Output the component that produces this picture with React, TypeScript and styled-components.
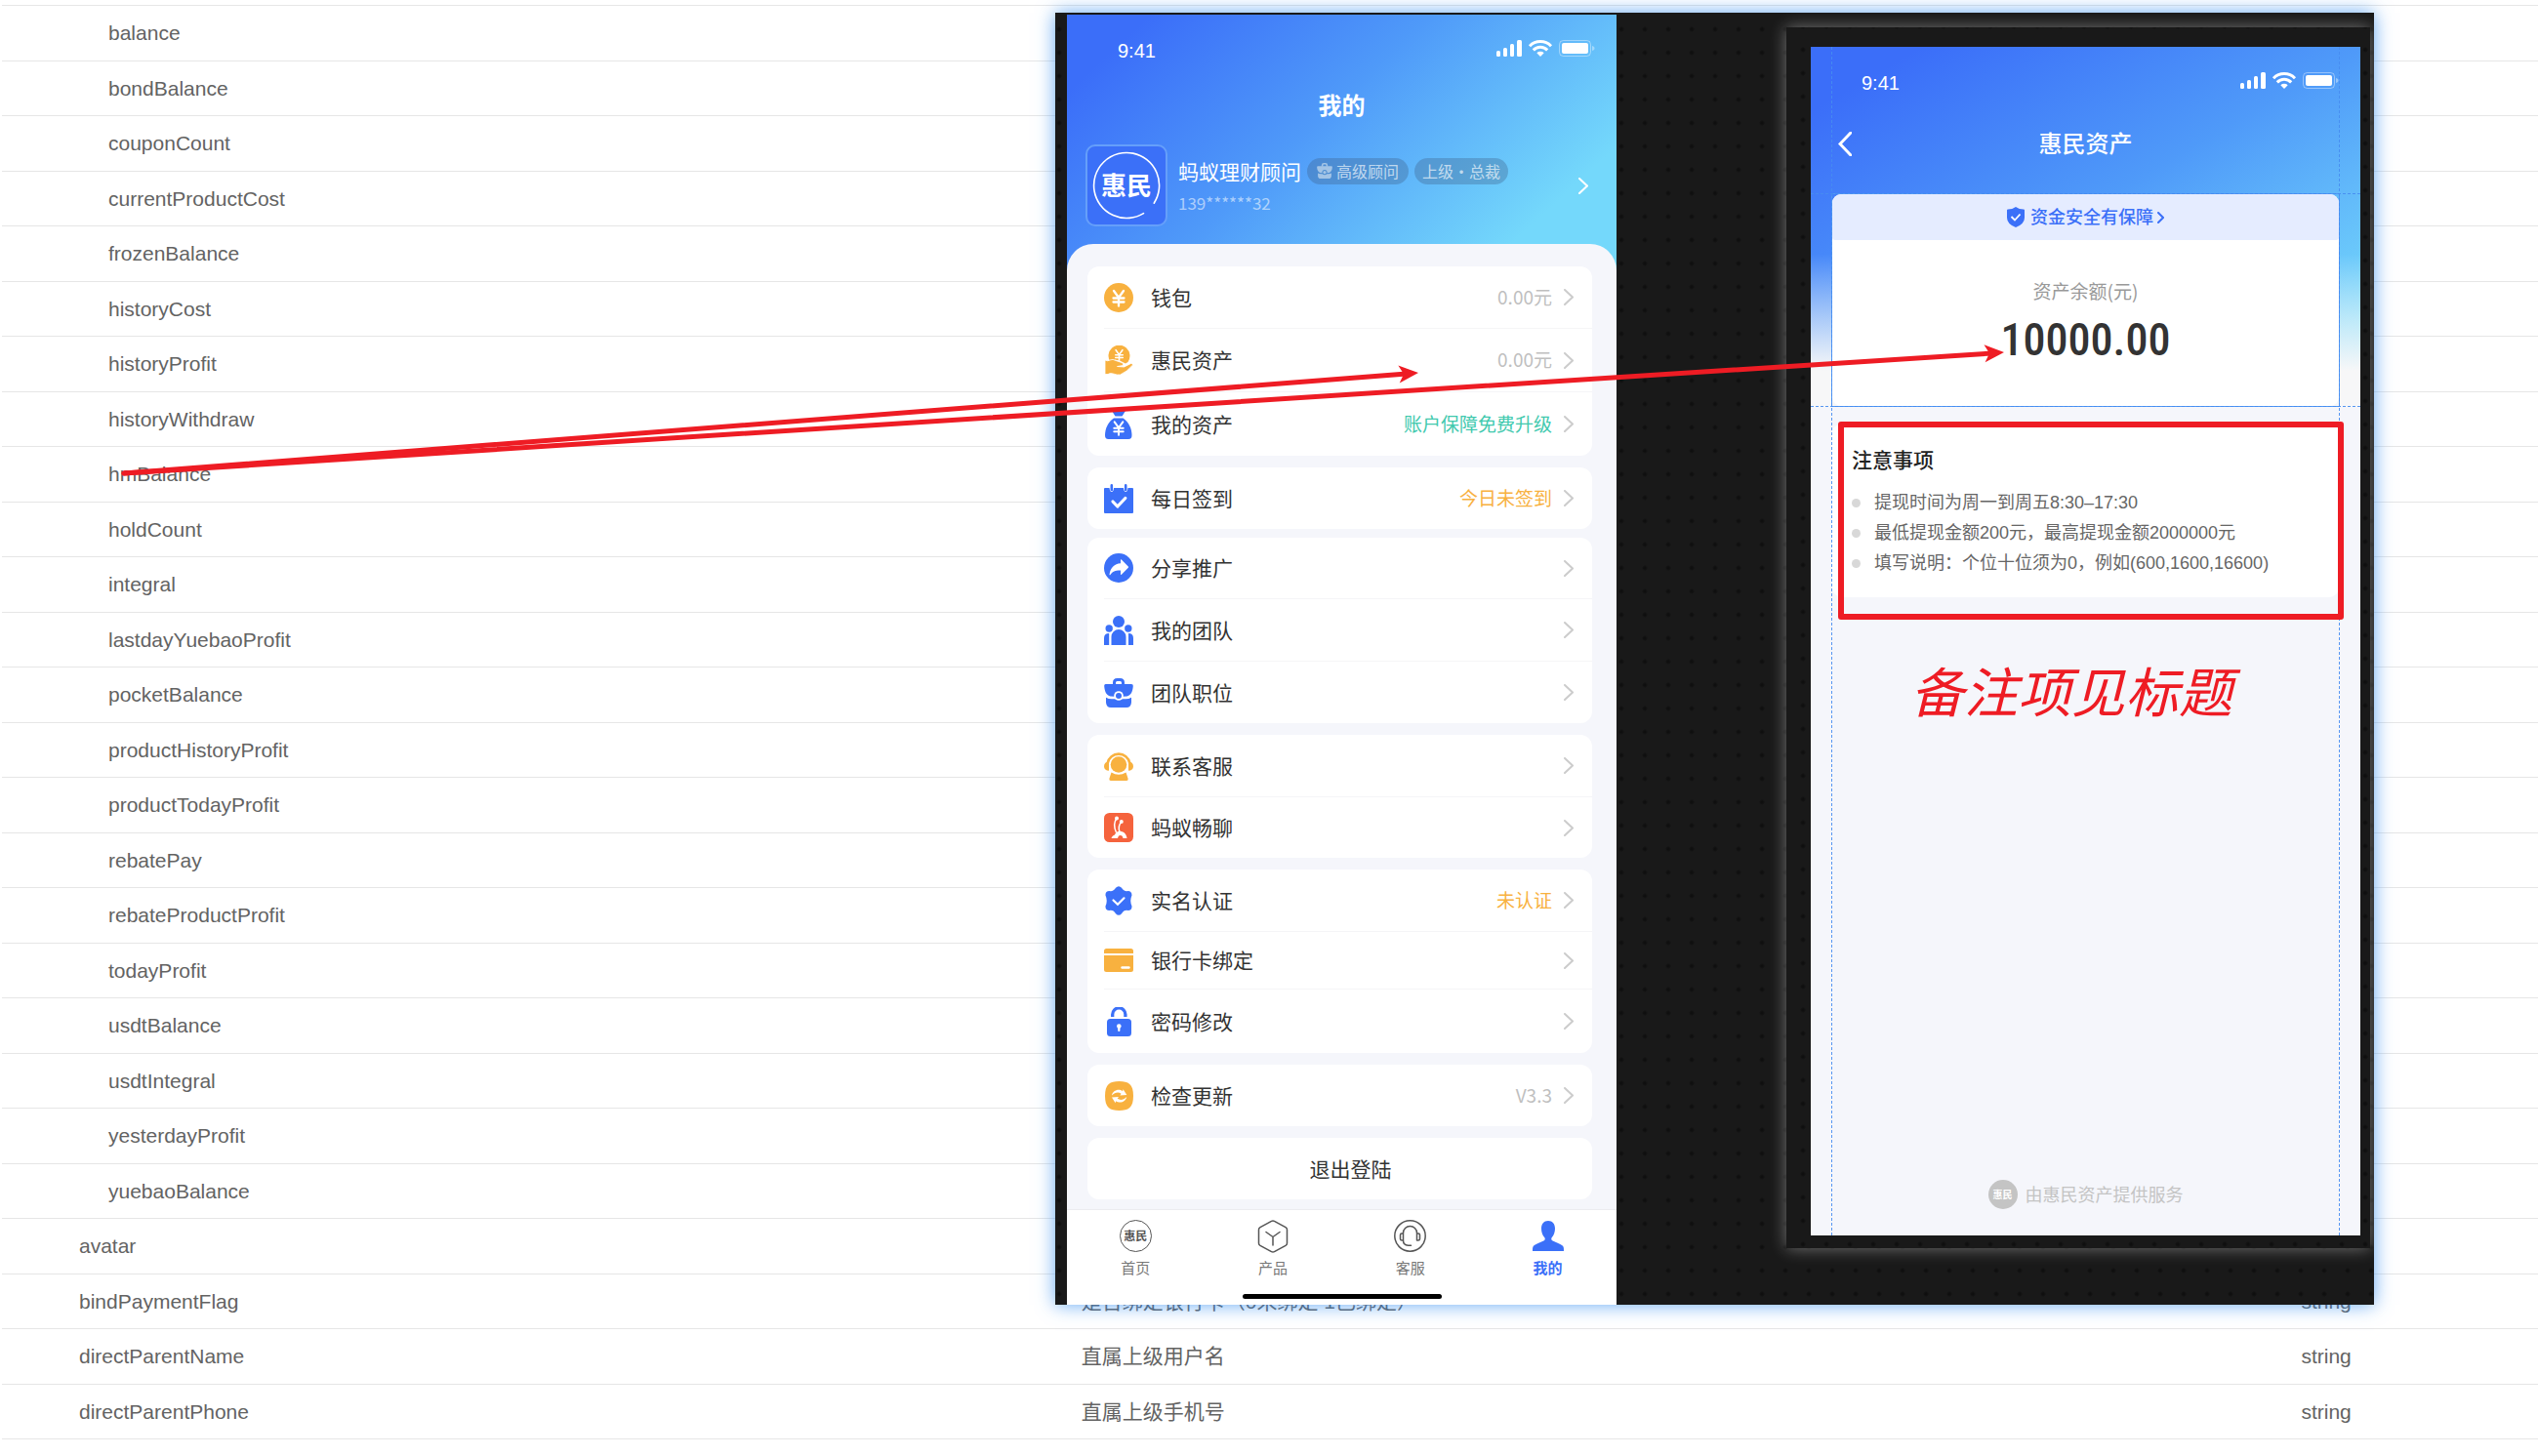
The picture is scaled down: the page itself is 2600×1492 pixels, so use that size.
import React from "react";
import styled, { createGlobalStyle } from "styled-components";

const BLUE = "#3b70f8";
const ORANGE = "#f8b13f";
const GREEN = "#41c9ae";
const RED = "#ee1c24";
const CJK = `"Noto Sans CJK SC", sans-serif`;
const LATIN = `"Liberation Sans", "Noto Sans CJK SC", sans-serif`;

const GlobalStyle = createGlobalStyle`
  * { box-sizing: border-box; }
  body { margin: 0; background: #fff; font-family: ${LATIN}; }
  button { border: 0; margin: 0; padding: 0; background: none; font: inherit; color: inherit; cursor: pointer; }
  ul { list-style: none; margin: 0; padding: 0; }
  h2, h3, p { margin: 0; font-weight: inherit; font-size: inherit; }
  svg { display: block; flex: none; }
`;

/* ---------- response field table ---------- */

const Page = styled.main`
  position: relative;
  min-height: 100vh;
  padding: 5px 0 0 2px;
  overflow: hidden;
`;

const FieldTable = styled.table`
  width: 100%;
  table-layout: fixed;
  border-collapse: separate;
  border-spacing: 0;
  border-top: 1px solid #e6e6e6;
  font-size: 21px;
  line-height: 30px;
  color: #636363;
`;

const FieldRow = styled.tr`
  height: 56px;
  &:nth-child(odd) {
    height: 57px;
  }
`;

const Cell = styled.td<{ $indent?: number }>`
  padding: 0 24px 0 ${(p) => p.$indent ?? 25}px;
  border-bottom: 1px solid #e6e6e6;
  white-space: nowrap;
`;

const Col = styled.col<{ $width: string }>`
  width: ${(p) => p.$width};
`;

type Field = { name: string; top?: boolean; desc?: string; type?: string };

const fields: Field[] = [
  ...[
    "balance",
    "bondBalance",
    "couponCount",
    "currentProductCost",
    "frozenBalance",
    "historyCost",
    "historyProfit",
    "historyWithdraw",
    "hmBalance",
    "holdCount",
    "integral",
    "lastdayYuebaoProfit",
    "pocketBalance",
    "productHistoryProfit",
    "productTodayProfit",
    "rebatePay",
    "rebateProductProfit",
    "todayProfit",
    "usdtBalance",
    "usdtIntegral",
    "yesterdayProfit",
    "yuebaoBalance",
  ].map((name) => ({ name })),
  { name: "avatar", top: true },
  { name: "bindPaymentFlag", top: true, desc: "是否绑定银行卡（0未绑定  1已绑定）", type: "string" },
  { name: "directParentName", top: true, desc: "直属上级用户名", type: "string" },
  { name: "directParentPhone", top: true, desc: "直属上级手机号", type: "string" },
];

/* ---------- floating design board ---------- */

const dots = "radial-gradient(circle at 12px 12px, #0f0f0f 1px, transparent 3px)";

const Board = styled.section`
  position: absolute;
  top: 13px;
  left: 1081px;
  width: 1351px;
  display: flex;
  justify-content: space-between;
  align-items: flex-start;
  padding: 2px 4px 0 12px;
  overflow: hidden;
  background: ${dots} -8px 5px / 24px 24px #191919;
  box-shadow: 0 0 18px rgba(50, 140, 240, 0.75);
  font-family: ${CJK};
`;

const Frame = styled.div`
  margin-top: 13px;
  padding: 20px 10px 13px 25px;
  background: ${dots} 5px 11px / 24px 24px #191919;
  box-shadow: 0 0 16px rgba(255, 255, 255, 0.4);
`;

const Phone = styled.article`
  position: relative;
  width: 563px;
  display: flex;
  flex-direction: column;
`;

const ProfilePhone = styled(Phone)`
  background: linear-gradient(137deg, #3b6ef9 10%, #4f9af9 44%, #74d8fb 83%) top / 100% 270px no-repeat #f5f6fb;
`;

const AssetPhone = styled(Phone)`
  min-height: 1218px;
  background:
    linear-gradient(180deg, rgba(247, 247, 248, 0) 64%, #f7f7f8 100%) top / 100% 332px no-repeat,
    linear-gradient(150deg, #3b6ef9 10%, #4f9af9 50%, #74d8fb 92%) top / 100% 332px no-repeat,
    linear-gradient(#f7f7f8, #f7f7f8) top / 100% 369px no-repeat,
    #f5f6fb;
`;

const StatusRow = styled.div`
  height: 66px;
  padding: 8px 22px 0 52px;
  display: flex;
  align-items: center;
  justify-content: space-between;
  color: #fff;
  font: 20px/24px ${LATIN};
  svg {
    margin-bottom: 5px;
  }
`;

const NavTitle = styled.header<{ $height: number; $bold?: boolean }>`
  height: ${(p) => p.$height}px;
  padding: 0 28px;
  display: grid;
  grid-template-columns: 24px 1fr 24px;
  align-items: center;
  text-align: center;
  color: #fff;
  font-size: 24px;
  line-height: 36px;
  font-weight: ${(p) => (p.$bold ? 700 : 500)};
  h2 {
    grid-column: 2;
    padding-bottom: 2px;
  }
`;

const Profile = styled.section`
  display: flex;
  align-items: center;
  padding: 13px 29px 18px 19px;
  color: #fff;
`;

const Avatar = styled.div`
  width: 84px;
  height: 84px;
  border: 2px solid #659ffa;
  border-radius: 10px;
  background: ${BLUE};
  display: grid;
  place-items: center;
  font-size: 26px;
  font-weight: 700;
  line-height: 36px;
  > * {
    grid-area: 1 / 1;
  }
  span {
    padding-bottom: 2px;
  }
`;

const Who = styled.div`
  flex: 1;
  margin-left: 11px;
  display: flex;
  flex-direction: column;
  gap: 6px;
`;

const NameLine = styled.div`
  display: flex;
  align-items: center;
  gap: 6px;
  font-size: 21px;
  line-height: 30px;
`;

const Tag = styled.span<{ $pad: number }>`
  height: 27px;
  padding: 0 ${(p) => p.$pad}px 1px;
  border-radius: 14px;
  display: flex;
  align-items: center;
  gap: 4px;
  background: rgba(60, 90, 130, 0.32);
  color: rgba(255, 255, 255, 0.65);
  font-size: 16px;
  line-height: 24px;
`;

const PhoneNo = styled.p`
  font-size: 17px;
  line-height: 24px;
  color: rgba(255, 255, 255, 0.55);
`;

const Sheet = styled.div`
  padding: 23px 25px 10px 21px;
  border-radius: 27px 27px 0 0;
  background: #f5f6fb;
`;

const Card = styled.ul<{ $after?: number }>`
  margin-bottom: ${(p) => p.$after ?? 12}px;
  padding-left: 17px;
  border-radius: 12px;
  background: #fff;
  li + li {
    border-top: 1px solid #f5f5f7;
  }
`;

const Row = styled.button<{ $height: number }>`
  width: 100%;
  height: ${(p) => p.$height}px;
  padding-right: 19px;
  display: flex;
  align-items: center;
  text-align: left;
`;

const RowItem = styled.li`
  display: flex;
`;

const RowLabel = styled.span`
  flex: 1;
  margin-left: 18px;
  padding-bottom: 2px;
  font-size: 21px;
  line-height: 30px;
  color: #333;
`;

const RowValue = styled.span<{ $color: string }>`
  margin-right: 12px;
  padding-bottom: 2px;
  font-size: 19px;
  line-height: 30px;
  color: ${(p) => p.$color};
`;

const Logout = styled.button`
  width: 100%;
  height: 63px;
  padding: 0 0 2px 22px;
  border-radius: 12px;
  background: #fff;
  color: #333;
  font-size: 21px;
  line-height: 30px;
`;

const TabBar = styled.nav`
  display: grid;
  grid-template-columns: repeat(4, 1fr);
  height: 87px;
  padding-top: 10px;
  border-top: 1px solid #ececf0;
  background: #fff;
`;

const Tab = styled.button<{ $active?: boolean }>`
  display: flex;
  flex-direction: column;
  align-items: center;
  gap: 5px;
  font-size: 15px;
  line-height: 22px;
  color: ${(p) => (p.$active ? BLUE : "#777")};
  font-weight: ${(p) => (p.$active ? 700 : 400)};
`;

const TabGlyph = styled.span`
  height: 33px;
  display: grid;
  place-items: center;
`;

const RoundLogo = styled.span<{ $size: number; $fill?: boolean }>`
  width: ${(p) => p.$size}px;
  height: ${(p) => p.$size}px;
  padding-bottom: 1px;
  border-radius: 50%;
  border: ${(p) => (p.$fill ? "0" : "1px solid #555")};
  background: ${(p) => (p.$fill ? "#c4c4c4" : "#fff")};
  color: ${(p) => (p.$fill ? "#fff" : "#555")};
  display: grid;
  place-items: center;
  font-size: ${(p) => (p.$fill ? 10 : 12)}px;
  line-height: 16px;
  font-weight: 700;
`;

const HomeBar = styled.div`
  height: 11px;
  background: #fff;
  &::before {
    content: "";
    display: block;
    width: 204px;
    height: 5px;
    margin: 0 auto;
    border-radius: 3px;
    background: #000;
  }
`;

/* ---------- asset screen ---------- */

const BackButton = styled.button`
  grid-column: 1;
`;

const AssetBody = styled.div`
  flex: 1;
  display: flex;
  flex-direction: column;
  padding: 18px 21px 27px;
`;

const AssetCard = styled.section`
  height: 219px;
  display: flex;
  border: 1px solid #4f97f5;
`;

const AssetPanel = styled.div`
  flex: 1;
  border-radius: 9px;
  background: #fff;
  text-align: center;
`;

const Safety = styled.button`
  width: 100%;
  height: 47px;
  display: flex;
  align-items: center;
  justify-content: center;
  gap: 4px;
  border-radius: 9px 9px 3px 3px;
  background: #e5ecff;
  color: ${BLUE};
  font-size: 18px;
  font-weight: 500;
  line-height: 26px;
`;

const SafetyText = styled.span`
  margin-left: 2px;
  padding-bottom: 3px;
`;

const AssetCaption = styled.p`
  margin-top: 38px;
  font-size: 19px;
  line-height: 28px;
  color: #999;
`;

const Amount = styled.p`
  margin-top: 8px;
  font-family: "Roboto Condensed", Roboto, sans-serif;
  font-size: 46px;
  font-weight: 500;
  line-height: 56px;
  color: #333;
`;

const Notes = styled.section`
  margin-top: 17px;
  height: 178px;
  padding: 23px 21px;
  border-radius: 12px;
  background: #fff;
  font-family: ${LATIN};
`;

const NotesTitle = styled.h3`
  font-size: 21px;
  font-weight: 500;
  line-height: 30px;
  color: #222;
`;

const NotesList = styled.ul`
  margin-top: 13px;
`;

const Note = styled.li`
  display: flex;
  align-items: center;
  gap: 14px;
  font-size: 18px;
  line-height: 31px;
  color: #666;
  white-space: nowrap;
  &::before {
    content: "";
    width: 9px;
    height: 9px;
    border-radius: 50%;
    background: #d8d8d8;
  }
`;

const Provider = styled.footer`
  margin-top: auto;
  display: flex;
  align-items: center;
  justify-content: center;
  gap: 8px;
  font-size: 18px;
  line-height: 28px;
  color: #c4c4c4;
`;

const ProviderName = styled.span`
  padding-bottom: 2px;
`;

const guide = "rgba(70, 140, 240, 0.9) 0 3px, transparent 3px 5px";

const VGuide = styled.i<{ $side: "left" | "right" }>`
  position: absolute;
  top: 0;
  bottom: 0;
  ${(p) => p.$side}: 21px;
  width: 1px;
  background: repeating-linear-gradient(180deg, ${guide});
`;

const HGuide = styled.i<{ $top: number }>`
  position: absolute;
  left: 0;
  right: 0;
  top: ${(p) => p.$top}px;
  height: 1px;
  background: repeating-linear-gradient(90deg, ${guide});
`;

/* ---------- red review marks ---------- */

const Marks = styled.svg`
  position: absolute;
  top: 0;
  left: 0;
  pointer-events: none;
`;

const MarkBox = styled.div`
  position: absolute;
  left: 1883px;
  top: 432px;
  width: 518px;
  height: 203px;
  border: 6px solid ${RED};
  border-radius: 3px;
`;

const MarkText = styled.p`
  position: absolute;
  left: 1957px;
  top: 666px;
  font: italic 400 55px/80px ${CJK};
  color: ${RED};
  white-space: nowrap;
`;

/* ---------- icons ---------- */

const Chevron = ({ color = "#ccc", w = 10, h = 17, stroke = 2, flip = false }) => (
  <svg width={w} height={h} viewBox={`0 0 ${w} ${h}`} fill="none" stroke={color} strokeWidth={stroke}>
    <path d={flip ? `M${w - 1} 1L2 ${h / 2}l${w - 3} ${h / 2 - 1}` : `M1 1l${w - 2} ${h / 2 - 1}L1 ${h - 1}`} strokeLinecap="round" />
  </svg>
);

const StatusIcons = () => (
  <svg width="101" height="18" viewBox="0 0 101 18" fill="#fff">
    <rect x="0" y="11" width="4" height="6" rx="1.5" />
    <rect x="7" y="8" width="4" height="9" rx="1.5" />
    <rect x="14" y="4" width="4" height="13" rx="1.5" />
    <rect x="21" y="0" width="5" height="17" rx="1.5" />
    <g fill="none" stroke="#fff" strokeWidth="3">
      <path d="M34 6.2a15.5 15.5 0 0 1 22 0" />
      <path d="M37.8 10.4a10 10 0 0 1 14.4 0" />
    </g>
    <path d="M41.3 13.2a5.4 5.4 0 0 1 7.4 0L45 17z" />
    <rect x="64.5" y=".5" width="32" height="16" rx="4" fill="none" stroke="#fff" strokeOpacity=".4" />
    <rect x="67" y="3" width="27" height="11" rx="2" />
    <path d="M98 6v5c2-.5 2.5-1.5 2.5-2.5S100 6.5 98 6z" opacity=".4" />
  </svg>
);

const AvatarRing = () => (
  <svg width="70" height="70" viewBox="0 0 70 70" fill="none" stroke="#fff" strokeWidth="1.6">
    <path d="M52.5 63.6A33.5 33.5 0 1 1 63.2 53.2" strokeLinecap="round" />
  </svg>
);

const Yen = ({ x = 15, y = 7, s = 1 }) => (
  <path
    transform={`translate(${x} ${y}) scale(${s})`}
    d="M-5 1l5 7 5-7M0 8v8.5M-5.5 8.5h11M-5.5 12.5h11"
    fill="none"
    stroke="#fff"
    strokeWidth="2.3"
    strokeLinecap="round"
  />
);

const Briefcase = ({ size = 30, color = BLUE, gap = "#fff" }) => (
  <svg width={size} height={size} viewBox="0 0 30 30">
    <path d="M10.500 7V4.500Q10.500 1.500 13.500 1.500h3q3 0 3 3V7" fill="none" stroke={color} strokeWidth="3" />
    <path d="M2 6h26q2 0 1.800 2c-.5 6-2.300 9.500-6.300 10.600L15 19l-8.500-.4C2.500 17.500.7 14 .2 8 0 6 2 6 2 6z" fill={color} />
    <path d="M2 19.700q3 1.800 7 1.500h12q4 .3 7-1.500v5q-.4 5.300-5 5.300H7q-4.600 0-5-5.300z" fill={color} />
    <circle cx="15" cy="18" r="4.800" fill={gap} />
    <circle cx="15" cy="18" r="3" fill={color} />
  </svg>
);

const icons: Record<string, React.ReactNode> = {
  coin: (
    <svg width="30" height="30" viewBox="0 0 30 30">
      <circle cx="15" cy="15" r="15" fill={ORANGE} />
      <Yen />
    </svg>
  ),
  hand: (
    <svg width="30" height="30" viewBox="0 0 30 30">
      <path d="M6.500 17A11 11 0 1 1 24.500 17L22 18.500 16 15.500 11 14.500z" fill={ORANGE} />
      <Yen x={15.500} y={4} s={0.68} />
      <path d="M1 15q3 1.500 5 0 3-1.500 6 .5l6 2q2.500 1 1.500 3l-6 1 7 .5 7-3.500q2-.5 2 1.500-6 7-13 10-3 .5-7-1-3.500-1-5.500.5H1z" fill={ORANGE} stroke="#fff" strokeWidth=".8" />
    </svg>
  ),
  bag: (
    <svg width="30" height="30" viewBox="0 0 30 30">
      <path d="M8 1q3.500 1.500 7 0t7 0l-3.500 5.500h-7z" fill={BLUE} />
      <path d="M10 8.500h9.500c5.500 3.500 9 10.500 9 17.500 0 2.600-1 4-3.500 4H4.500C2 30 1 28.600 1 26 1 19 4.500 12 10 8.500z" fill={BLUE} />
      <Yen x={15} y={11.500} s={0.86} />
    </svg>
  ),
  calendar: (
    <svg width="30" height="30" viewBox="0 0 30 30">
      <path d="M1 4h4.500q.5 4 2.300 4t2.300-4h9.800q.5 4 2.300 4t2.300-4H29q1 0 1 1v24q0 1-1 1H1q-1 0-1-1V5q0-1 1-1z" fill={BLUE} />
      <path d="M7.800 1.400V6M22.200 1.400V6" stroke={BLUE} strokeWidth="2.600" strokeLinecap="round" />
      <path d="M9 18l4.800 5 8-8.500" fill="none" stroke="#fff" strokeWidth="3.200" strokeLinecap="round" strokeLinejoin="round" />
    </svg>
  ),
  share: (
    <svg width="30" height="30" viewBox="0 0 30 30">
      <circle cx="15" cy="15" r="15" fill={BLUE} />
      <path d="M17 6.500q.3-.6.900-.1l6.900 7.200q.5.600 0 1.100l-6.900 7q-.8.500-.9-.3v-4c-5-.2-8 .8-10.400 4.400-.6.900-1.300.5-1-.6C6.800 14.500 10.500 10.800 17 10.300z" fill="#fff" />
    </svg>
  ),
  team: (
    <svg width="30" height="30" viewBox="0 0 30 30" fill={BLUE}>
      <circle cx="15" cy="6" r="6" />
      <circle cx="5.200" cy="13" r="3.700" />
      <circle cx="24.800" cy="13" r="3.700" />
      <path d="M7.500 30v-8.500a7.500 7.500 0 0 1 15 0V30zM0 30v-7q0-5 5.200-5V30zM30 30v-7q0-5-5-5V30z" />
    </svg>
  ),
  briefcase: <Briefcase />,
  service: (
    <svg width="30" height="30" viewBox="0 0 30 30" fill={ORANGE}>
      <path d="M3.700 12a11.500 11.500 0 0 1 22.600 0" fill="none" stroke={ORANGE} strokeWidth="2.600" />
      <circle cx="15" cy="13.500" r="8.300" />
      <path d="M5 10.500v9.300C2 19.800 0 18 0 15.200s2-4.700 5-4.700zM25 10.500v9.300c3 0 5-1.800 5-4.600s-2-4.700-5-4.700zM7.500 21.500q7.500 4.500 15 0l2 6q.5 2.500-1.500 2.500H7q-2 0-1.500-2.500z" />
    </svg>
  ),
  ant: (
    <svg width="30" height="30" viewBox="0 0 30 30">
      <rect width="30" height="30" rx="5.500" fill="#f5633d" />
      <g fill="none" stroke="#fff" strokeWidth="1.500">
        <path d="M13 5.500c-3 4-3 9-.5 14.500M17.500 9.500c-2.500 3-3 6-1.500 10" />
      </g>
      <circle cx="13" cy="5.500" r="2" fill="#fff" />
      <circle cx="17.800" cy="9" r="2" fill="#fff" />
      <path d="M7.500 26c.5-2 2-3 3.500-3.600.7-2.600 3-4 5.500-3.700 4 .3 6.500 3 7 7.300h-4c-.3-2-1.200-3-2.800-3-1.500 0-2.200 1-2.700 3z" fill="#fff" />
    </svg>
  ),
  verified: (
    <svg width="30" height="30" viewBox="0 0 30 30">
      <path d="M12 1.800Q15-1.500 18 1.800q2.500 4 6.500 3.200 4 0 4 4.500-2.500 5.500 0 11 .3 4.500-4 4.500-4-.8-6.500 3.200-3 3.300-6 0Q9.500 24.200 5.500 25q-4.300 0-4-4.500 2.500-5.500 0-11Q1.200 5 5.500 5q4 .8 6.500-3.200z" fill={BLUE} />
      <path d="M9.500 14.500l4.500 4.300 6.500-6.500" fill="none" stroke="#fff" strokeWidth="2.200" strokeLinecap="round" />
    </svg>
  ),
  card: (
    <svg width="30" height="24" viewBox="0 0 30 24">
      <path d="M2.500 0h25Q30 0 30 2.500V5H0V2.500Q0 0 2.500 0zM0 7h30v14.500q0 2.500-2.500 2.500h-25Q0 24 0 21.500z" fill={ORANGE} />
      <path d="M18.500 19.500h7" stroke="#fff" strokeWidth="2.400" strokeLinecap="round" />
    </svg>
  ),
  lock: (
    <svg width="30" height="30" viewBox="0 0 30 30">
      <path d="M8.700 10V7.500a6.600 6.600 0 0 1 13.200 0V10" fill="none" stroke={BLUE} strokeWidth="3.300" />
      <rect x="3" y="12" width="25" height="18" rx="3.500" fill={BLUE} />
      <circle cx="15.300" cy="19.500" r="2.300" fill="#fff" />
      <path d="M15.300 20v4" stroke="#fff" strokeWidth="2.200" strokeLinecap="round" />
    </svg>
  ),
  refresh: (
    <svg width="30" height="30" viewBox="1 0 30 30">
      <path d="M16.500 0C26 0 31 3 31 15s-5 15-14.500 15S2 27 2 15 7 0 16.500 0z" fill={ORANGE} />
      <path d="M9 14.500c.8-5 7-7.500 11-4.300l.6-2 3.700 5.800-7 .6 1.300-1.900c-3-2-6.500-1.300-9.600 1.800zM24.200 16c-.8 5-7 7.300-11 4.200l-.6 2L9 16.500l7-.6-1.300 1.900c3 2 6.400 1.300 9.500-1.800z" fill="#fff" />
    </svg>
  ),
};

const ProductIcon = () => (
  <svg width="32" height="34" viewBox="0 0 32 34" fill="none" stroke="#555" strokeWidth="1.500" strokeLinejoin="round">
    <path d="M14.500 1.400q1.500-.8 3 0L29 7.600q1.500.9 1.500 2.500v13.800q0 1.600-1.500 2.500l-11.500 6.200q-1.500.8-3 0L3 26.400q-1.500-.9-1.500-2.500V10.100Q1.500 8.500 3 7.600z" />
    <path d="M9 12.500l7 5 7-5M16 17.500V26" strokeLinecap="round" />
  </svg>
);

const HeadsetIcon = () => (
  <svg width="33" height="33" viewBox="0 0 33 33" fill="none" stroke="#555" strokeWidth="1.500">
    <circle cx="16.500" cy="16.500" r="15.700" />
    <path d="M9.500 21V13.500a7 7 0 0 1 14 0V21M9.500 14H8q-1.500 0-1.500 1.500v4Q6.500 21 8 21h1.500M23.500 14H25q1.500 0 1.500 1.500v4Q26.500 21 25 21h-1.500M9.500 21q0 5 5 5.200h3" strokeLinecap="round" />
  </svg>
);

const MineIcon = () => (
  <svg width="32" height="31" viewBox="0 0 32 31" fill={BLUE}>
    <path d="M16 0c4.500 0 7 3 7 8 0 3.500-1.200 7-3.200 9-.8 1-.8 2.500.4 3.200 4 2 9.800 3.600 11.300 6.300.5 1.500.5 2.500.5 4.500H0c0-2 0-3 .5-4.500 1.500-2.700 7.300-4.300 11.300-6.300 1.200-.7 1.200-2.200.4-3.200C10.200 15 9 11.500 9 8c0-5 2.500-8 7-8z" />
  </svg>
);

const Shield = () => (
  <svg width="18" height="21" viewBox="0 0 18 21">
    <path d="M9 0q3.500 2.500 8 2.500 1 0 1 1V11q0 6.500-9 10Q0 17.500 0 11V3.500q0-1 1-1Q5.500 2.500 9 0z" fill={BLUE} />
    <path d="M4.500 10l3.500 3.500 5.500-6" fill="none" stroke="#fff" strokeWidth="1.800" />
  </svg>
);

/* ---------- screens ---------- */

type Item = { icon: string; label: string; height: number; value?: string; color?: string };

const groups: { after?: number; items: Item[] }[] = [
  {
    items: [
      { icon: "coin", label: "钱包", height: 63, value: "0.00元" },
      { icon: "hand", label: "惠民资产", height: 64, value: "0.00元" },
      { icon: "bag", label: "我的资产", height: 65, value: "账户保障免费升级", color: GREEN },
    ],
  },
  { after: 9, items: [{ icon: "calendar", label: "每日签到", height: 63, value: "今日未签到", color: ORANGE }] },
  {
    items: [
      { icon: "share", label: "分享推广", height: 62 },
      { icon: "team", label: "我的团队", height: 63 },
      { icon: "briefcase", label: "团队职位", height: 63 },
    ],
  },
  {
    items: [
      { icon: "service", label: "联系客服", height: 63 },
      { icon: "ant", label: "蚂蚁畅聊", height: 62 },
    ],
  },
  {
    items: [
      { icon: "verified", label: "实名认证", height: 63, value: "未认证", color: ORANGE },
      { icon: "card", label: "银行卡绑定", height: 58 },
      { icon: "lock", label: "密码修改", height: 65 },
    ],
  },
  { items: [{ icon: "refresh", label: "检查更新", height: 63, value: "V3.3" }] },
];

const ProfileScreen = () => (
  <ProfilePhone>
    <StatusRow>
      <span>9:41</span>
      <StatusIcons />
    </StatusRow>
    <NavTitle $height={54} $bold>
      <h2>我的</h2>
    </NavTitle>
    <Profile>
      <Avatar>
        <AvatarRing />
        <span>惠民</span>
      </Avatar>
      <Who>
        <NameLine>
          <span>蚂蚁理财顾问</span>
          <Tag $pad={10}>
            <Briefcase size={16} color="#a3c4e6" gap="#4f8fd0" />
            高级顾问
          </Tag>
          <Tag $pad={8}>上级·总裁</Tag>
        </NameLine>
        <PhoneNo>139******32</PhoneNo>
      </Who>
      <Chevron color="#fff" />
    </Profile>
    <Sheet>
      {groups.map((g) => (
        <Card key={g.items[0].label} $after={g.after}>
          {g.items.map((it) => (
            <RowItem key={it.label}>
              <Row type="button" $height={it.height}>
                {icons[it.icon]}
                <RowLabel>{it.label}</RowLabel>
                {it.value && <RowValue $color={it.color ?? "#bfbfbf"}>{it.value}</RowValue>}
                <Chevron />
              </Row>
            </RowItem>
          ))}
        </Card>
      ))}
      <Logout type="button">退出登陆</Logout>
    </Sheet>
    <TabBar>
      <Tab type="button">
        <TabGlyph>
          <RoundLogo $size={33}>惠民</RoundLogo>
        </TabGlyph>
        首页
      </Tab>
      <Tab type="button">
        <TabGlyph>
          <ProductIcon />
        </TabGlyph>
        产品
      </Tab>
      <Tab type="button">
        <TabGlyph>
          <HeadsetIcon />
        </TabGlyph>
        客服
      </Tab>
      <Tab type="button" $active>
        <TabGlyph>
          <MineIcon />
        </TabGlyph>
        我的
      </Tab>
    </TabBar>
    <HomeBar />
  </ProfilePhone>
);

const AssetScreen = () => (
  <AssetPhone>
    <VGuide $side="left" />
    <VGuide $side="right" />
    <HGuide $top={150} />
    <HGuide $top={368} />
    <StatusRow>
      <span>9:41</span>
      <StatusIcons />
    </StatusRow>
    <NavTitle $height={66}>
      <BackButton type="button" aria-label="返回">
        <Chevron color="#fff" w={14} h={25} stroke={3} flip />
      </BackButton>
      <h2>惠民资产</h2>
    </NavTitle>
    <AssetBody>
      <AssetCard>
        <AssetPanel>
          <Safety type="button">
            <Shield />
            <SafetyText>资金安全有保障</SafetyText>
            <Chevron color={BLUE} w={7} h={12} />
          </Safety>
          <AssetCaption>资产余额(元)</AssetCaption>
          <Amount>10000.00</Amount>
        </AssetPanel>
      </AssetCard>
      <Notes>
        <NotesTitle>注意事项</NotesTitle>
        <NotesList>
          <Note>提现时间为周一到周五8:30–17:30</Note>
          <Note>最低提现金额200元，最高提现金额2000000元</Note>
          <Note>填写说明：个位十位须为0，例如(600,1600,16600)</Note>
        </NotesList>
      </Notes>
      <Provider>
        <RoundLogo $size={30} $fill>
          惠民
        </RoundLogo>
        <ProviderName>由惠民资产提供服务</ProviderName>
      </Provider>
    </AssetBody>
  </AssetPhone>
);

const Arrow = ({ x, y }: { x: number; y: number }) => {
  const from = { x: 127, y: 485 };
  const angle = (Math.atan2(y - from.y, x - from.x) * 180) / Math.PI;
  return (
    <g>
      <line x1={from.x} y1={from.y} x2={x - 12} y2={y + 1} stroke={RED} strokeWidth="5" strokeLinecap="round" />
      <path d="M0 0L-20 -9L-15 0L-20 9z" fill={RED} transform={`translate(${x} ${y}) rotate(${angle})`} />
    </g>
  );
};

export default function App() {
  return (
    <Page>
      <GlobalStyle />
      <FieldTable>
        <colgroup>
          <Col $width="41.6%" />
          <Col $width="48.1%" />
          <Col $width="auto" />
        </colgroup>
        <tbody>
          {fields.map((f) => (
            <FieldRow key={f.name}>
              <Cell $indent={f.top ? 79 : 109}>{f.name}</Cell>
              <Cell>{f.desc}</Cell>
              <Cell>{f.type}</Cell>
            </FieldRow>
          ))}
        </tbody>
      </FieldTable>
      <Board>
        <ProfileScreen />
        <Frame>
          <AssetScreen />
        </Frame>
      </Board>
      <MarkBox />
      <MarkText>备注项见标题</MarkText>
      <Marks width="2100" height="520">
        <Arrow x={1453} y={382} />
        <Arrow x={2053} y={361} />
      </Marks>
    </Page>
  );
}
